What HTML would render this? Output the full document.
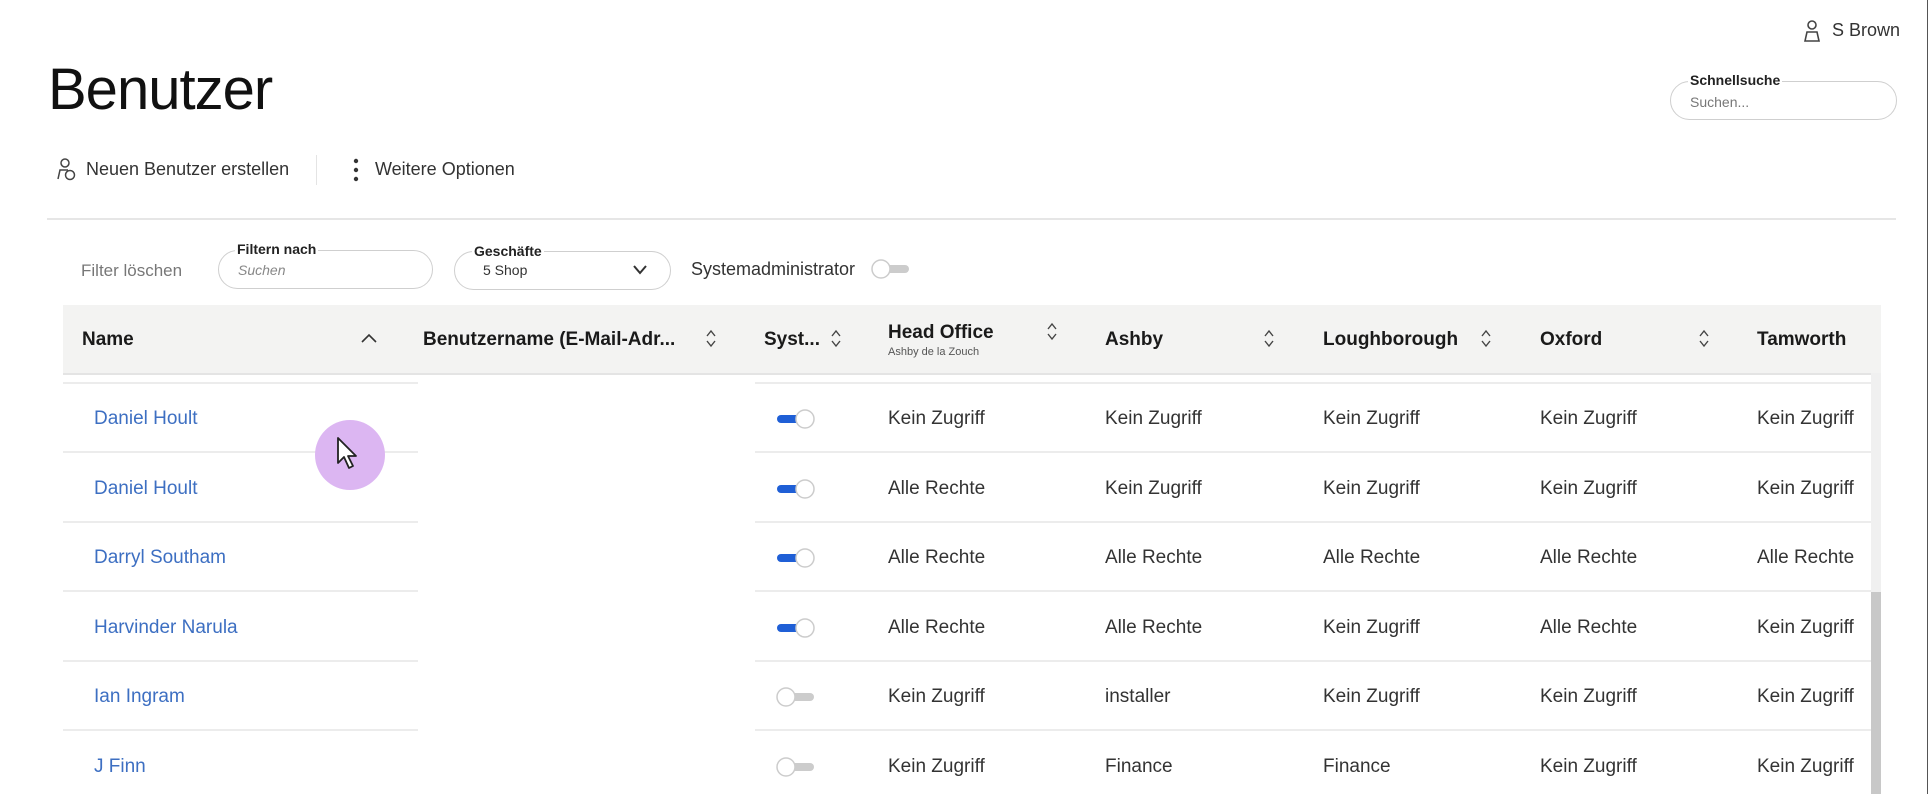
<!DOCTYPE html><html><head><meta charset="utf-8"><style>
*{margin:0;padding:0;box-sizing:border-box}
body{width:1930px;height:794px;background:#fff;font-family:"Liberation Sans",sans-serif;color:#2a2a2a;position:relative;overflow:hidden}
.a{position:absolute;white-space:nowrap}
.h{font-weight:bold;font-size:19px;color:#1a1a1a;top:329px}
.c{font-size:19px;color:#333}
.n{font-size:19px;color:#3d6fc2}
.box{position:absolute;border:1px solid #cfcfcf;border-radius:20px}
.lbl{position:absolute;font-size:14px;font-weight:bold;background:#fff;padding:0 2px;color:#222}
.line{position:absolute;height:2px;background:#ececec}
.tg{position:absolute;width:40px;height:20px}
.sort{position:absolute;top:329px}
</style></head><body>
<div class="a" style="right:2px;top:0;width:1px;height:794px;background:#555"></div>
<svg class="a" style="left:1803px;top:19px" width="18" height="24" viewBox="0 0 18 24" fill="none" stroke="#444" stroke-width="1.6"><circle cx="9" cy="6" r="4"/><path d="M2 22 L4 13 H14 L16 22 Z"/></svg>
<div class="a" style="left:1832px;top:20px;font-size:18px;color:#333">S Brown</div>
<div class="a" style="left:48px;top:56px;font-size:58px;color:#111;letter-spacing:-1px">Benutzer</div>
<div class="box" style="left:1670px;top:81px;width:227px;height:39px"></div>
<div class="lbl" style="left:1688px;top:72px">Schnellsuche</div>
<div class="a" style="left:1690px;top:94px;font-size:14px;color:#777">Suchen...</div>
<svg class="a" style="left:56px;top:157px" width="22" height="26" viewBox="0 0 22 26" fill="none" stroke="#444" stroke-width="1.5"><circle cx="9" cy="6" r="4"/><path d="M2 22 L4 13 H12"/><circle cx="14" cy="18" r="4.5"/></svg>
<div class="a" style="left:86px;top:159px;font-size:18px;color:#333">Neuen Benutzer erstellen</div>
<div class="a" style="left:316px;top:155px;width:1px;height:30px;background:#e4e4e4"></div>
<svg class="a" style="left:352px;top:158px" width="8" height="24"><circle cx="4" cy="3" r="2.2" fill="#333"/><circle cx="4" cy="12" r="2.2" fill="#333"/><circle cx="4" cy="21" r="2.2" fill="#333"/></svg>
<div class="a" style="left:375px;top:159px;font-size:18px;color:#333">Weitere Optionen</div>
<div class="a" style="left:47px;top:218px;width:1849px;height:2px;background:#e6e6e6"></div>
<div class="a" style="left:81px;top:261px;font-size:17px;color:#777">Filter löschen</div>
<div class="box" style="left:218px;top:250px;width:215px;height:39px"></div>
<div class="lbl" style="left:235px;top:241px">Filtern nach</div>
<div class="a" style="left:238px;top:262px;font-size:14px;color:#888;font-style:italic">Suchen</div>
<div class="box" style="left:454px;top:251px;width:217px;height:39px"></div>
<div class="lbl" style="left:472px;top:243px">Geschäfte</div>
<div class="a" style="left:483px;top:262px;font-size:14px;color:#333">5 Shop</div>
<svg class="a" style="left:632px;top:264px" width="16" height="12" fill="none" stroke="#333" stroke-width="2"><path d="M2 2 L8 9 L14 2"/></svg>
<div class="a" style="left:691px;top:259px;font-size:18px;color:#333">Systemadministrator</div>
<svg class="tg" style="left:871px;top:259px"><rect x="8" y="6" width="30" height="8" rx="4" fill="#ccc"/><circle cx="10" cy="10" r="9" fill="#fff" stroke="#ccc" stroke-width="1.5"/></svg>
<div class="a" style="left:63px;top:305px;width:1818px;height:68px;background:#f3f3f2"></div>
<div class="a" style="left:1871px;top:373px;width:10px;height:421px;background:#f0f0f0"></div>
<div class="a" style="left:1871px;top:592px;width:10px;height:202px;background:#c8c8c8"></div>
<div class="line" style="left:63px;top:373px;width:1808px;height:2px;background:#e4e4e4"></div>
<div class="a h" style="left:82px">Name</div>
<svg class="a" style="left:360px;top:332px" width="18" height="12" fill="none" stroke="#333" stroke-width="1.6"><path d="M2 10 L9 3 L16 10"/></svg>
<div class="a h" style="left:423px">Benutzername (E-Mail-Adr...</div>
<div class="a h" style="left:764px">Syst...</div>
<div class="a h" style="left:888px;top:322px">Head Office</div>
<div class="a" style="left:888px;top:346px;font-size:11px;color:#555">Ashby de la Zouch</div>
<div class="a h" style="left:1105px">Ashby</div>
<div class="a h" style="left:1323px">Loughborough</div>
<div class="a h" style="left:1540px">Oxford</div>
<div class="a h" style="left:1757px">Tamworth</div>
<svg width="0" height="0" style="position:absolute"><defs><g id="s"><path d="M2 7 L6 2 L10 7 M2 12 L6 17 L10 12" fill="none" stroke="#444" stroke-width="1.4"/></g></defs></svg>
<svg class="a" style="left:705px;top:329px" width="12" height="20"><use href="#s"/></svg>
<svg class="a" style="left:830px;top:329px" width="12" height="20"><use href="#s"/></svg>
<svg class="a" style="left:1046px;top:322px" width="12" height="20"><use href="#s"/></svg>
<svg class="a" style="left:1263px;top:329px" width="12" height="20"><use href="#s"/></svg>
<svg class="a" style="left:1480px;top:329px" width="12" height="20"><use href="#s"/></svg>
<svg class="a" style="left:1698px;top:329px" width="12" height="20"><use href="#s"/></svg>
<div class="line" style="left:63px;top:382px;width:355px"></div><div class="line" style="left:755px;top:382px;width:1116px"></div>
<div class="line" style="left:63px;top:451px;width:355px"></div><div class="line" style="left:755px;top:451px;width:1116px"></div>
<div class="line" style="left:63px;top:521px;width:355px"></div><div class="line" style="left:755px;top:521px;width:1116px"></div>
<div class="line" style="left:63px;top:590px;width:355px"></div><div class="line" style="left:755px;top:590px;width:1116px"></div>
<div class="line" style="left:63px;top:660px;width:355px"></div><div class="line" style="left:755px;top:660px;width:1116px"></div>
<div class="line" style="left:63px;top:729px;width:355px"></div><div class="line" style="left:755px;top:729px;width:1116px"></div>

<div class="a n" style="left:94px;top:408px">Daniel Hoult</div>
<div class="a n" style="left:94px;top:478px">Daniel Hoult</div>
<div class="a n" style="left:94px;top:547px">Darryl Southam</div>
<div class="a n" style="left:94px;top:617px">Harvinder Narula</div>
<div class="a n" style="left:94px;top:686px">Ian Ingram</div>
<div class="a n" style="left:94px;top:756px">J Finn</div>

<svg class="tg" style="left:776px;top:409px"><rect x="1" y="6" width="28" height="8" rx="4" fill="#1f5fd6"/><circle cx="29" cy="10" r="9" fill="#fff" stroke="#ccc" stroke-width="1.5"/></svg>
<svg class="tg" style="left:776px;top:479px"><rect x="1" y="6" width="28" height="8" rx="4" fill="#1f5fd6"/><circle cx="29" cy="10" r="9" fill="#fff" stroke="#ccc" stroke-width="1.5"/></svg>
<svg class="tg" style="left:776px;top:548px"><rect x="1" y="6" width="28" height="8" rx="4" fill="#1f5fd6"/><circle cx="29" cy="10" r="9" fill="#fff" stroke="#ccc" stroke-width="1.5"/></svg>
<svg class="tg" style="left:776px;top:618px"><rect x="1" y="6" width="28" height="8" rx="4" fill="#1f5fd6"/><circle cx="29" cy="10" r="9" fill="#fff" stroke="#ccc" stroke-width="1.5"/></svg>
<svg class="tg" style="left:776px;top:687px"><rect x="8" y="6" width="30" height="8" rx="4" fill="#ccc"/><circle cx="10" cy="10" r="9" fill="#fff" stroke="#ccc" stroke-width="1.5"/></svg>
<svg class="tg" style="left:776px;top:757px"><rect x="8" y="6" width="30" height="8" rx="4" fill="#ccc"/><circle cx="10" cy="10" r="9" fill="#fff" stroke="#ccc" stroke-width="1.5"/></svg>

<div class="a c" style="left:888px;top:408px">Kein Zugriff</div><div class="a c" style="left:1105px;top:408px">Kein Zugriff</div><div class="a c" style="left:1323px;top:408px">Kein Zugriff</div><div class="a c" style="left:1540px;top:408px">Kein Zugriff</div><div class="a c" style="left:1757px;top:408px">Kein Zugriff</div>
<div class="a c" style="left:888px;top:478px">Alle Rechte</div><div class="a c" style="left:1105px;top:478px">Kein Zugriff</div><div class="a c" style="left:1323px;top:478px">Kein Zugriff</div><div class="a c" style="left:1540px;top:478px">Kein Zugriff</div><div class="a c" style="left:1757px;top:478px">Kein Zugriff</div>
<div class="a c" style="left:888px;top:547px">Alle Rechte</div><div class="a c" style="left:1105px;top:547px">Alle Rechte</div><div class="a c" style="left:1323px;top:547px">Alle Rechte</div><div class="a c" style="left:1540px;top:547px">Alle Rechte</div><div class="a c" style="left:1757px;top:547px">Alle Rechte</div>
<div class="a c" style="left:888px;top:617px">Alle Rechte</div><div class="a c" style="left:1105px;top:617px">Alle Rechte</div><div class="a c" style="left:1323px;top:617px">Kein Zugriff</div><div class="a c" style="left:1540px;top:617px">Alle Rechte</div><div class="a c" style="left:1757px;top:617px">Kein Zugriff</div>
<div class="a c" style="left:888px;top:686px">Kein Zugriff</div><div class="a c" style="left:1105px;top:686px">installer</div><div class="a c" style="left:1323px;top:686px">Kein Zugriff</div><div class="a c" style="left:1540px;top:686px">Kein Zugriff</div><div class="a c" style="left:1757px;top:686px">Kein Zugriff</div>
<div class="a c" style="left:888px;top:756px">Kein Zugriff</div><div class="a c" style="left:1105px;top:756px">Finance</div><div class="a c" style="left:1323px;top:756px">Finance</div><div class="a c" style="left:1540px;top:756px">Kein Zugriff</div><div class="a c" style="left:1757px;top:756px">Kein Zugriff</div>

<div class="a" style="left:315px;top:420px;width:70px;height:70px;border-radius:50%;background:#dcb6f2"></div>
<svg class="a" style="left:336px;top:436px" width="26" height="36" viewBox="0 0 26 36"><path d="M2 2 L2 27 L8 21 L13 32 L17 30 L12 20 L20 20 Z" fill="#fff" stroke="#222" stroke-width="1.8" stroke-linejoin="round"/></svg>
</body></html>
